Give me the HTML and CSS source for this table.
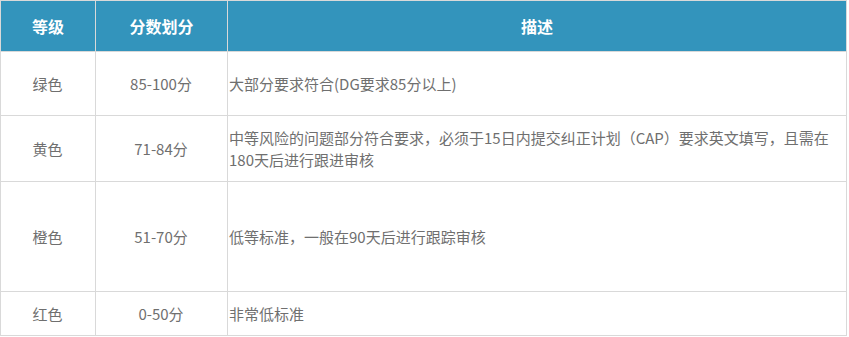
FILE: index.html
```html
<!DOCTYPE html>
<html lang="zh-CN">
<head>
<meta charset="utf-8">
<title>等级</title>
<link rel="stylesheet" href="styles.css">
</head>
<body>
<table class="grade-table">
  <colgroup>
    <col class="c-level">
    <col class="c-score">
    <col class="c-desc">
  </colgroup>
  <thead>
    <tr class="head-row">
      <th>等级</th>
      <th>分数划分</th>
      <th>描述</th>
    </tr>
  </thead>
  <tbody>
    <tr class="r1">
      <td class="center">绿色</td>
      <td class="center">85-100分</td>
      <td>大部分要求符合(DG要求85分以上)</td>
    </tr>
    <tr class="r2">
      <td class="center">黄色</td>
      <td class="center">71-84分</td>
      <td>中等风险的问题部分符合要求，必须于15日内提交纠正计划（CAP）要求英文填写，且需在180天后进行跟进审核</td>
    </tr>
    <tr class="r3">
      <td class="center">橙色</td>
      <td class="center">51-70分</td>
      <td>低等标准，一般在90天后进行跟踪审核</td>
    </tr>
    <tr class="r4">
      <td class="center">红色</td>
      <td class="center">0-50分</td>
      <td>非常低标准</td>
    </tr>
  </tbody>
</table>
</body>
</html>
```
FILE: styles.css
```css
html, body {
  margin: 0;
  padding: 0;
  background: #ffffff;
}

.grade-table {
  width: 847px;
  border-collapse: collapse;
  table-layout: fixed;
  font-family: "Noto Sans CJK SC", "Microsoft YaHei", sans-serif;
  font-size: 15px;
  color: #6f6f6f;
  border: 1px solid #d9d9d9;
}

.c-level { width: 95px; }
.c-score { width: 132px; }

.grade-table th,
.grade-table td {
  border: 1px solid #d9d9d9;
  vertical-align: middle;
  line-height: 22px;
}

.grade-table th {
  background: #3394bc;
  color: #ffffff;
  font-size: 16px;
  font-weight: bold;
  text-align: center;
  height: 50px;
  padding: 0;
}

.grade-table td {
  padding: 0 2px 0 1px;
}

.grade-table td.center {
  text-align: center;
}

.r1 td { height: 63px; }
.r2 td { height: 65px; }
.r3 td { height: 109px; }
.r4 td { height: 43px; }
```
